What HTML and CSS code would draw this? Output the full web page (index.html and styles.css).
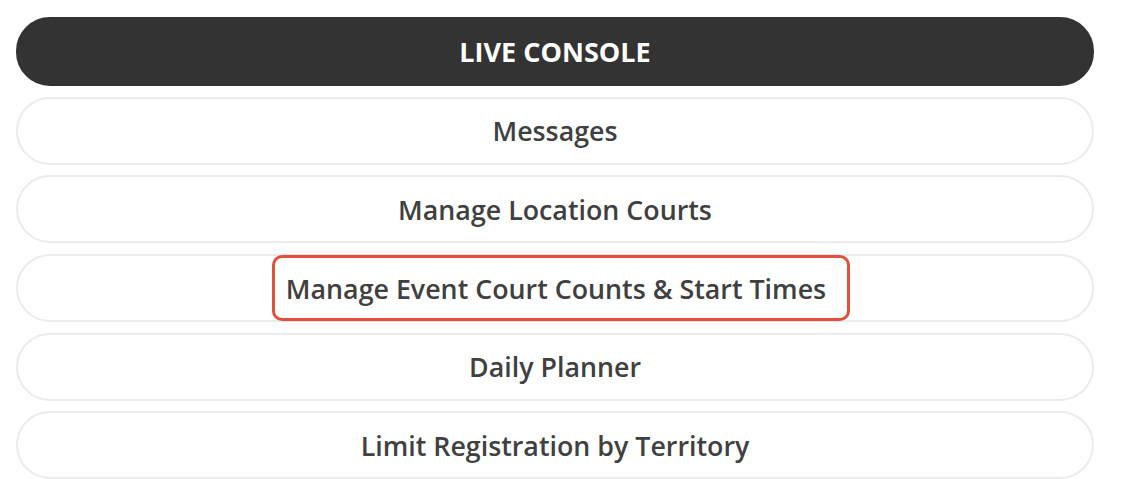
FILE: index.html
```html
<!DOCTYPE html>
<html>
<head>
<meta charset="utf-8">
<link rel="stylesheet" href="styles.css">
</head>
<body>
<div class="menu">
  <div class="btn btn-dark">LIVE CONSOLE</div>
  <div class="btn">Messages</div>
  <div class="btn">Manage Location Courts</div>
  <div class="btn"><span class="highlight">Manage Event Court Counts &amp; Start Times</span></div>
  <div class="btn">Daily Planner</div>
  <div class="btn">Limit Registration by Territory</div>
</div>
</body>
</html>
```
FILE: styles.css
```css
html, body {
  margin: 0;
  padding: 0;
  background: #ffffff;
}
body {
  font-family: "Open Sans", "Noto Sans", sans-serif;
}
.menu {
  display: flex;
  flex-direction: column;
  gap: 10.7px;
  width: 1078px;
  padding: 17px 0 0 16px;
}
.btn {
  box-sizing: border-box;
  height: 68px;
  border: 2px solid #ebebeb;
  border-radius: 34px;
  display: flex;
  align-items: center;
  justify-content: center;
  font-size: 26.8px;
  font-weight: 600;
  color: #404040;
  background: #fff;
}
.btn-dark {
  background: #333333;
  border-color: #333333;
  color: #ffffff;
  height: 69px;
  font-size: 27px;
  font-weight: 700;
}
.highlight {
  box-sizing: border-box;
  height: 66px;
  padding: 0 21px 0 11px;
  margin-left: 12px;
  border: 3px solid #e0503c;
  border-radius: 10px;
  display: flex;
  align-items: center;
  white-space: nowrap;
}
```
